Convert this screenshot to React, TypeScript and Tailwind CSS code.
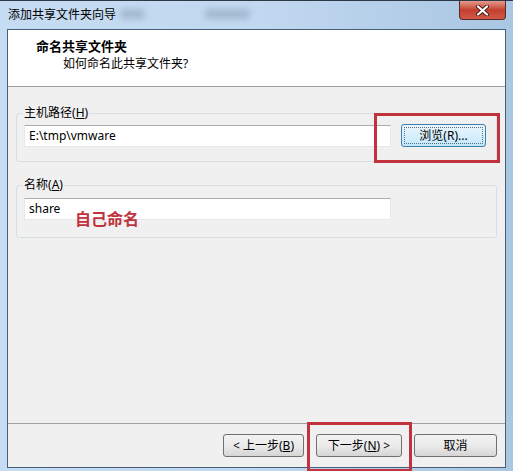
import type { ReactNode } from "react";

const ui = "font-['Noto_Sans','Noto_Sans_CJK_SC',sans-serif]";

function AeroButton({
  children,
  width,
  focused = false,
}: {
  children: ReactNode;
  width: string;
  focused?: boolean;
}) {
  return (
    <button
      className={`${width} h-[23px] shrink-0 rounded-[3px] border text-[12px] leading-none text-black ${
        focused
          ? "border-[#3c7fb1] bg-gradient-to-b from-[#eaf6fd] via-[#d9f0fc] to-[#bee6fd] p-[2px]"
          : "border-[#707070] bg-gradient-to-b from-[#f2f2f2] via-[#ebebeb] to-[#d5d5d5]"
      }`}
    >
      {focused ? (
        <span className="flex h-full w-full items-center justify-center border border-dotted border-[#5a6b7a]">
          {children}
        </span>
      ) : (
        children
      )}
    </button>
  );
}

function TextBox({ value }: { value: string }) {
  return (
    <div className="flex h-[22px] w-[367px] shrink-0 items-center border border-[#e3e9ef] border-t-[#abadb3] bg-white pl-[4px] text-[12px] text-black">
      {value}
    </div>
  );
}

function Group({
  label,
  hotkey,
  children,
  className,
}: {
  label: string;
  hotkey: string;
  children: ReactNode;
  className: string;
}) {
  return (
    <fieldset className={`rounded-[3px] border border-[#d5dfe5] pl-[7px] ${className}`}>
      <legend className="-ml-[1px] px-[1px] text-[12px] leading-[16px] text-black">
        {label}(<span className="underline">{hotkey}</span>)
      </legend>
      {children}
    </fieldset>
  );
}

export default function App() {
  return (
    <div className={`${ui} relative flex h-[471px] w-[513px] flex-col overflow-hidden bg-gradient-to-r from-[#c6dcf2] via-[#c2d8f0] to-[#a9c6e3]`}>
      {/* title bar */}
      <div className="relative flex h-[29px] shrink-0 items-start border-t border-[#2c3a48]">
        <div className="absolute left-[120px] top-[8px] h-[10px] w-[25px] rounded bg-[#8ea4bb] opacity-60 blur-[3px]" />
        <div className="absolute left-[205px] top-[8px] h-[10px] w-[45px] rounded bg-[#8ea4bb] opacity-60 blur-[3px]" />
        <span className="ml-[8px] mt-[7px] text-[12px] leading-[14px] text-black">添加共享文件夹向导</span>
        <div className="absolute right-[7px] top-0 flex h-[19px] w-[47px] items-center justify-center rounded-b-[4px] border border-t-0 border-[#5a2a26] bg-gradient-to-b from-[#e39a8c] via-[#c43e30] to-[#cf5a46]">
          <svg width="13" height="11" viewBox="0 0 13 11">
            <path d="M2 1.5 L11 9.5 M11 1.5 L2 9.5" stroke="#4a1a16" strokeWidth="4" strokeLinecap="round" />
            <path d="M2 1.5 L11 9.5 M11 1.5 L2 9.5" stroke="#ffffff" strokeWidth="2.2" strokeLinecap="round" />
          </svg>
        </div>
      </div>

      {/* client area */}
      <div className="ml-[7px] flex h-[439px] w-[499px] flex-col border border-[#46607a] bg-[#f0f0f0]">
        <div className="flex h-[57px] shrink-0 flex-col border-b border-[#a0a0a0] bg-white pl-[28px] pt-[8px]">
          <span className="text-[13px] font-bold leading-[17px] text-black">命名共享文件夹</span>
          <span className="ml-[27px] mt-[1px] text-[12px] leading-[16px] text-black">如何命名此共享文件夹?</span>
        </div>

        <div className="relative flex flex-1 flex-col px-[8px] pt-[18px]">
          <Group label="主机路径" hotkey="H" className="w-[481px] pb-[14px] pt-[3px]">
            <div className="flex items-center gap-[10px]">
              <TextBox value="E:\tmp\vmware" />
              <AeroButton width="w-[85px]" focused>
                浏览(R)...
              </AeroButton>
            </div>
          </Group>

          <Group label="名称" hotkey="A" className="mt-[15px] w-[481px] pb-[17px] pt-[5px]">
            <TextBox value="share" />
          </Group>

          {/* annotations */}
          <div className="absolute left-[366px] top-[26px] h-[50px] w-[126px] border-[3px] border-[#c0323c]" />
          <span className="absolute left-[67px] top-[122px] text-[16px] font-bold leading-[20px] text-[#c0323c]">自己命名</span>
        </div>

        <div className="relative flex h-[44px] shrink-0 items-center justify-end gap-[12px] border-t border-[#a0a0a0] pr-[8px]">
          <AeroButton width="w-[81px]">
            &lt; 上一步(<span className="underline">B</span>)
          </AeroButton>
          <AeroButton width="w-[86px]">
            下一步(<span className="underline">N</span>) &gt;
          </AeroButton>
          <AeroButton width="w-[83px]">取消</AeroButton>
          <div className="absolute left-[299px] top-[-2px] h-[50px] w-[105px] border-[3px] border-[#c0323c]" />
        </div>
      </div>
    </div>
  );
}
